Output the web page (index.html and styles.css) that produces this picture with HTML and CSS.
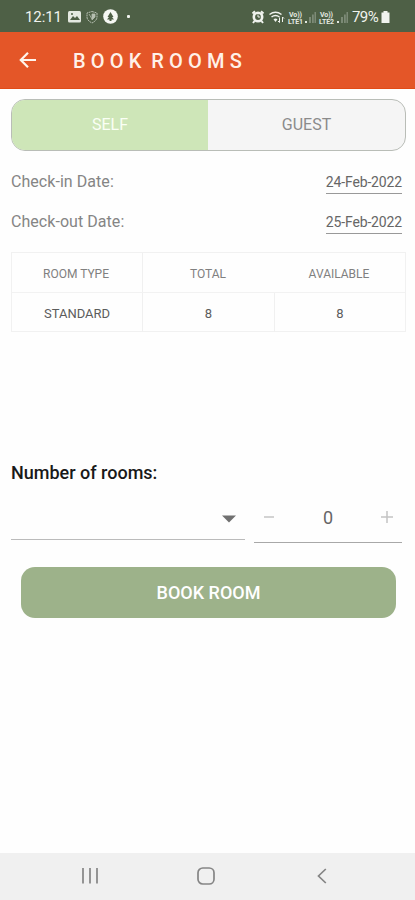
FILE: index.html
```html
<!DOCTYPE html>
<html lang="en">
<head>
<meta charset="utf-8">
<title>Book Rooms</title>
<link rel="stylesheet" href="styles.css">
</head>
<body>
<div class="status">
  <span class="clock">12:11</span>
  <svg class="notices" width="66" height="18" viewBox="0 0 66 18">
    <rect x="1" y="3" width="13" height="11.5" rx="1.5" fill="#e4e9e1"/>
    <path d="M3 12l3-4 2 2 2-2 3 4z" fill="#4e6046"/><circle cx="5" cy="6" r="1" fill="#4e6046"/>
    <path d="M25 3.5l5 1.5v4c0 2.500-2 4.500-5 6-3-1.500-5-3.500-5-6V5z" fill="none" stroke="#b5beb0" stroke-width="1" stroke-dasharray="2 .6"/>
    <path d="M22 6l3 5M25 6h3v3l-3 3z" fill="#b5beb0" stroke="#b5beb0" stroke-width=".8"/>
    <circle cx="43.500" cy="8.500" r="7.300" fill="#f5f7f3"/>
    <path d="M43.500 4l3 5h-1.500l2 2.500h-7L42 9h-1.500zM42.500 11h2v2h-2z" fill="#4e6046"/>
    <rect x="60" y="7" width="3" height="3" rx="1" fill="#f1f4ef"/>
  </svg>
  <svg class="signals" width="98" height="18" viewBox="0 0 98 18">
    <g fill="none" stroke="#f0f3ee">
      <circle cx="7" cy="9" r="4.200" stroke-width="2.600"/>
      <path d="M7 6.500V9h2.200" stroke-width="1"/>
      <path d="M1.500 5.500l2.500-2.200M12.500 5.500L10 3.300M3.500 13l-1.500 2M10.500 13l1.500 2" stroke-width="2"/>
      <path d="M18.500 6.500q6-4.500 12 0M20.500 9q4-3 8 0" stroke-width="1.500"/>
      <path d="M22.500 11.200q2-1.500 4 0L24.500 14z" fill="#f0f3ee" stroke="none"/>
      <path d="M28.500 9.500v5l-1.500-1.500M31.500 14v-5l1.500 1.500" stroke-width="1"/>
    </g>
    <g fill="#e3e8e0" class="carrier">
      <text x="38" y="8.500" textLength="13">Vo))</text><text x="37" y="15.500" textLength="15">LTE1</text>
      <text x="69" y="8.500" textLength="13">Vo))</text><text x="68" y="15.500" textLength="15">LTE2</text>
    </g>
    <g fill="#7c8a76"><path d="M58 9h2v6h-2zM61 6.500h1.800V15H61zM63.500 4h1.500v11h-1.500zM90 9h2v6h-2zM93 6.500h1.800V15H93zM95.500 4H97v11h-1.500z"/></g>
    <path d="M54 13h2v2h-2zM86 13h2v2h-2z" fill="#e3e8e0"/>
  </svg>
  <span class="percent">79%</span>
  <svg class="battery" width="9" height="14" viewBox="0 0 9 14"><path d="M2.500 1h4v1.500H8.500V13H.5V2.500h2z" fill="#f0f3ee"/></svg>
</div>
<header class="appbar">
  <svg width="18" height="18" viewBox="0 0 18 18" fill="none" stroke="#fff4ec" stroke-width="2.200"><path d="M17 9H2.500M9 1.800L1.800 9 9 16.200"/></svg>
  <h1>BOOK ROOMS</h1>
</header>
<main>
  <div class="tabs"><div class="tab active">SELF</div><div class="tab">GUEST</div></div>
  <div class="date-row"><span class="label">Check-in Date:</span><span class="date">24-Feb-2022</span></div>
  <div class="date-row"><span class="label">Check-out Date:</span><span class="date">25-Feb-2022</span></div>
  <div class="table">
    <div class="row head"><span>ROOM TYPE</span><span>TOTAL</span><span>AVAILABLE</span></div>
    <div class="row"><span>STANDARD</span><span>8</span><span>8</span></div>
  </div>
  <h2>Number of rooms:</h2>
  <div class="fields">
    <div class="select"><svg width="14" height="8" viewBox="0 0 14 8"><path d="M0 .5h14L7 7.500z" fill="#707070"/></svg></div>
    <div class="stepper">
      <svg width="12" height="12" viewBox="0 0 12 12"><path d="M1 6h10" stroke="#c4c4c4" stroke-width="1.500"/></svg>
      <span>0</span>
      <svg width="12" height="12" viewBox="0 0 12 12"><path d="M0 6h12M6 0v12" stroke="#c4c4c4" stroke-width="1.500"/></svg>
    </div>
  </div>
  <button class="book">BOOK ROOM</button>
</main>
<nav>
  <svg width="16" height="16" viewBox="0 0 16 16"><path d="M1 0v15.500M8 0v15.500M15 0v15.500" stroke="#858585" stroke-width="1.700"/></svg>
  <svg class="home" width="18" height="18" viewBox="0 0 18 18"><rect x="1" y="1" width="16" height="16" rx="4.800" fill="none" stroke="#858585" stroke-width="1.700"/></svg>
  <svg width="10" height="16" viewBox="0 0 10 16"><path d="M8.800 1L1.500 8l7.300 7" fill="none" stroke="#858585" stroke-width="1.700"/></svg>
</nav>
</body>
</html>
```
FILE: styles.css
```css
* { box-sizing: border-box; }
body { margin: 0; width: 415px; height: 900px; display: flex; flex-direction: column; background: #fefefe; font-family: Roboto, sans-serif; overflow: hidden; }
svg { display: block; flex: none; }
h1, h2 { margin: 0; }
.status { height: 32px; flex: none; background: #4e6046; color: #f0f3ee; display: flex; align-items: center; padding: 2px 0 0 25px; font-size: 15px; }
.clock { width: 42px; letter-spacing: -.1px; }
.signals { margin-left: 118px; }
.percent { margin-left: 3px; width: 29px; font-size: 15px; letter-spacing: -.6px; }
.battery { margin-left: 0; }
.carrier { font-size: 7px; font-weight: 700; }
.appbar { height: 57px; flex: none; background: #e45628; border-bottom: 1px solid #e14c17; display: flex; align-items: center; padding-left: 19px; }
.appbar h1 { margin-left: 36px; color: #fff1e8; font-size: 20px; line-height: 24px; font-weight: 500; letter-spacing: 5.2px; word-spacing: -5.5px; white-space: nowrap; padding-top: 2px; }
main { flex: 1; padding: 10px 9px 0 11px; }
.tabs { height: 52px; display: flex; border: 1px solid #b9bdb7; border-radius: 14px; overflow: hidden; background: #f5f5f5; }
.tab { flex: 1; display: flex; align-items: center; justify-content: center; padding-bottom: 1px; color: #8b8b8b; font-size: 16px; }
.tab.active { flex: 0 0 196px; background: #cee6b8; color: #fafff5; }
.date-row { display: flex; justify-content: space-between; height: 40px; padding: 21px 4px 0 0; }
.date-row + .date-row { height: 41px; }
.label { font-size: 16px; line-height: 20px; color: #858585; letter-spacing: .05px; }
.date { font-size: 14px; line-height: 20px; height: 22px; color: #666; letter-spacing: -.15px; border-bottom: 1px solid #999; }
.table { margin-top: 20px; height: 80px; border: 1px solid #f1f1f1; }
.row { height: 39px; display: grid; grid-template-columns: 131px 132px 1fr; color: #5c5c5c; font-size: 13px; }
.row.head { height: 40px; border-bottom: 1px solid #f2f2f2; color: #808080; font-size: 12px; }
.row span { display: flex; align-items: center; justify-content: center; padding-top: 2px; border-right: 1px solid #f0f0f0; }
.row.head span:nth-child(2), .row span:last-child { border-right: 0; }
.row.head span { padding: 3px 2px 0 0; }
h2 { margin-top: 129px; font-size: 18px; line-height: 24px; font-weight: 500; color: #191919; }
.fields { display: flex; align-items: flex-start; gap: 9px; padding-right: 4px; }
.select { width: 234px; height: 55px; border-bottom: 1px solid #bbb; padding: 30px 9px 0 0; display: flex; justify-content: flex-end; }
.stepper { flex: 1; height: 58px; border-bottom: 1px solid #a8a8a8; display: flex; align-items: center; justify-content: space-between; padding: 7px 9px 0; color: #666; font-size: 18px; }
.book { display: block; margin: 24px 0 0 10px; width: 375px; height: 51px; border: 0; border-radius: 14px; background: #9db28a; color: #fff; font: 500 18px Roboto, sans-serif; }
nav { height: 47px; flex: none; background: #f0f0f0; display: flex; align-items: center; justify-content: space-between; padding: 0 88px 1px 82px; }
.home { margin-right: 4px; }
```
